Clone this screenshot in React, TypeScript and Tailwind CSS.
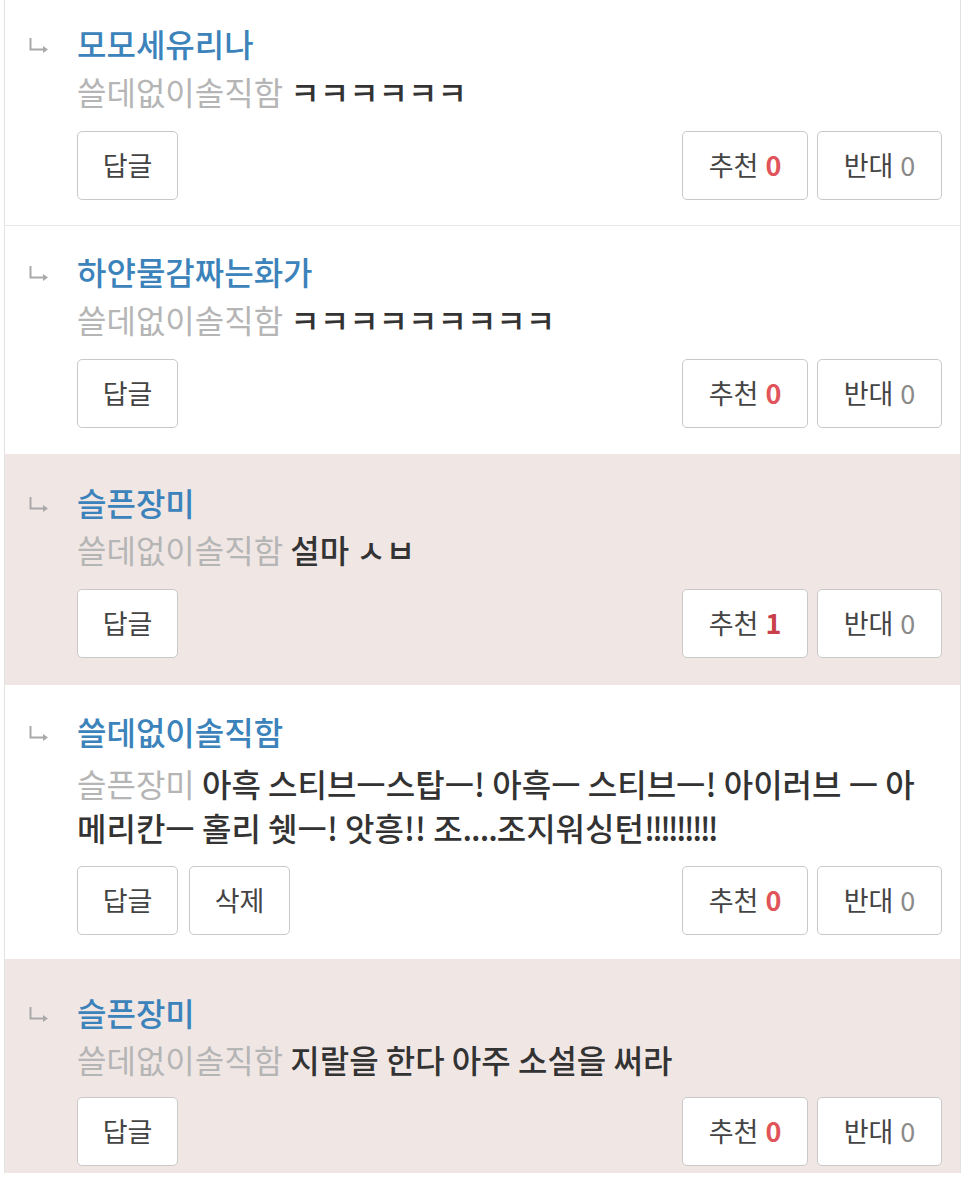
import React from "react";

type Row = {
  name: string;
  author: string;
  lines: React.ReactNode[];
  up: number;
  down: number;
  del?: boolean;
  rowCls: string;
  bodyCls: string;
  btnCls: string;
};

const rows: Row[] = [
  {
    name: "모모세유리나",
    author: "쓸데없이솔직함",
    lines: ["ㅋㅋㅋㅋㅋㅋ"],
    up: 0,
    down: 0,
    rowCls: "bg-white pt-[21px] pb-[25px] border-b border-[#e6e6e6]",
    bodyCls: "mt-[4px]",
    btnCls: "mt-[18px]",
  },
  {
    name: "하얀물감짜는화가",
    author: "쓸데없이솔직함",
    lines: ["ㅋㅋㅋㅋㅋㅋㅋㅋㅋ"],
    up: 0,
    down: 0,
    rowCls: "bg-white pt-[23px] pb-[26px]",
    bodyCls: "mt-[4px]",
    btnCls: "mt-[18px]",
  },
  {
    name: "슬픈장미",
    author: "쓸데없이솔직함",
    lines: ["설마 ㅅㅂ"],
    up: 1,
    down: 0,
    rowCls: "bg-[#f0e7e5] pt-[26px] pb-[27px]",
    bodyCls: "mt-[3px]",
    btnCls: "mt-[18px]",
  },
  {
    name: "쓸데없이솔직함",
    author: "슬픈장미",
    lines: [
      "아흑 스티브ㅡ스탑ㅡ! 아흑ㅡ 스티브ㅡ! 아이러브 ㅡ 아",
      <>
        메리칸ㅡ 홀리 쉣ㅡ! 앗흥!! 조
        <span className="tracking-[-1px]">....</span>
        조지워싱턴
        <span className="tracking-[-3px]">!!!!!!!!!</span>
      </>,
    ],
    up: 0,
    down: 0,
    del: true,
    rowCls: "bg-white pt-[24px] pb-[24px]",
    bodyCls: "mt-[8px]",
    btnCls: "mt-[17px]",
  },
  {
    name: "슬픈장미",
    author: "쓸데없이솔직함",
    lines: ["지랄을 한다 아주 소설을 써라"],
    up: 0,
    down: 0,
    rowCls: "bg-[#f0e7e5] pt-[31px] pb-[7px]",
    bodyCls: "mt-[3px]",
    btnCls: "mt-[16px]",
  },
];

function ReplyArrow() {
  return (
    <svg width="22" height="16" viewBox="0 0 22 16" fill="none">
      <path d="M2.5 1 V12.5 H16" stroke="#a9a9a9" strokeWidth="2" />
      <path d="M15 9 L20 12.5 L15 16 Z" fill="#a9a9a9" />
    </svg>
  );
}

function Btn({ children, w }: { children: React.ReactNode; w: string }) {
  return (
    <div
      className={
        "h-[69px] flex items-center justify-center rounded-[5px] border border-[#c9c9c9] bg-white text-[27px] text-[#444] " +
        w
      }
    >
      {children}
    </div>
  );
}

export default function App() {
  return (
    <div
      className="min-h-[1187px] bg-white"
      style={{ fontFamily: '"Noto Sans CJK KR", "Noto Sans", sans-serif' }}
    >
      <div className="ml-[4px] w-[957px] border-x border-[#e2e2e2]">
        {rows.map((r, i) => (
          <div key={i} className={"flex pr-[18px] " + r.rowCls}>
            <div className="w-[72px] shrink-0 pl-[23px] pt-[16px]">
              <ReplyArrow />
            </div>
            <div className="flex-1 min-w-0">
              <div className="text-[32px] leading-[44px] font-medium text-[#3b83ba]">
                {r.name}
              </div>
              <div className={"text-[32px] leading-[44px] " + r.bodyCls}>
                {r.lines.map((l, j) => (
                  <div key={j} className="whitespace-nowrap">
                    {j === 0 && (
                      <span className="text-[#b5b5b5]">{r.author} </span>
                    )}
                    <span className="text-[#333] font-medium">{l}</span>
                  </div>
                ))}
              </div>
              <div className={"flex items-center justify-between " + r.btnCls}>
                <div className="flex gap-[11px]">
                  <Btn w="w-[101px]">답글</Btn>
                  {r.del && <Btn w="w-[101px]">삭제</Btn>}
                </div>
                <div className="flex gap-[9px]">
                  <Btn w="w-[126px]">
                    <span>추천</span>
                    <span
                      className={
                        "ml-[7px] font-bold " +
                        (r.up > 0 ? "text-[#c8414a]" : "text-[#e0545a]")
                      }
                    >
                      {r.up}
                    </span>
                  </Btn>
                  <Btn w="w-[125px]">
                    <span>반대</span>
                    <span className="ml-[7px] text-[#8a8a8a]">{r.down}</span>
                  </Btn>
                </div>
              </div>
            </div>
          </div>
        ))}
      </div>
    </div>
  );
}
